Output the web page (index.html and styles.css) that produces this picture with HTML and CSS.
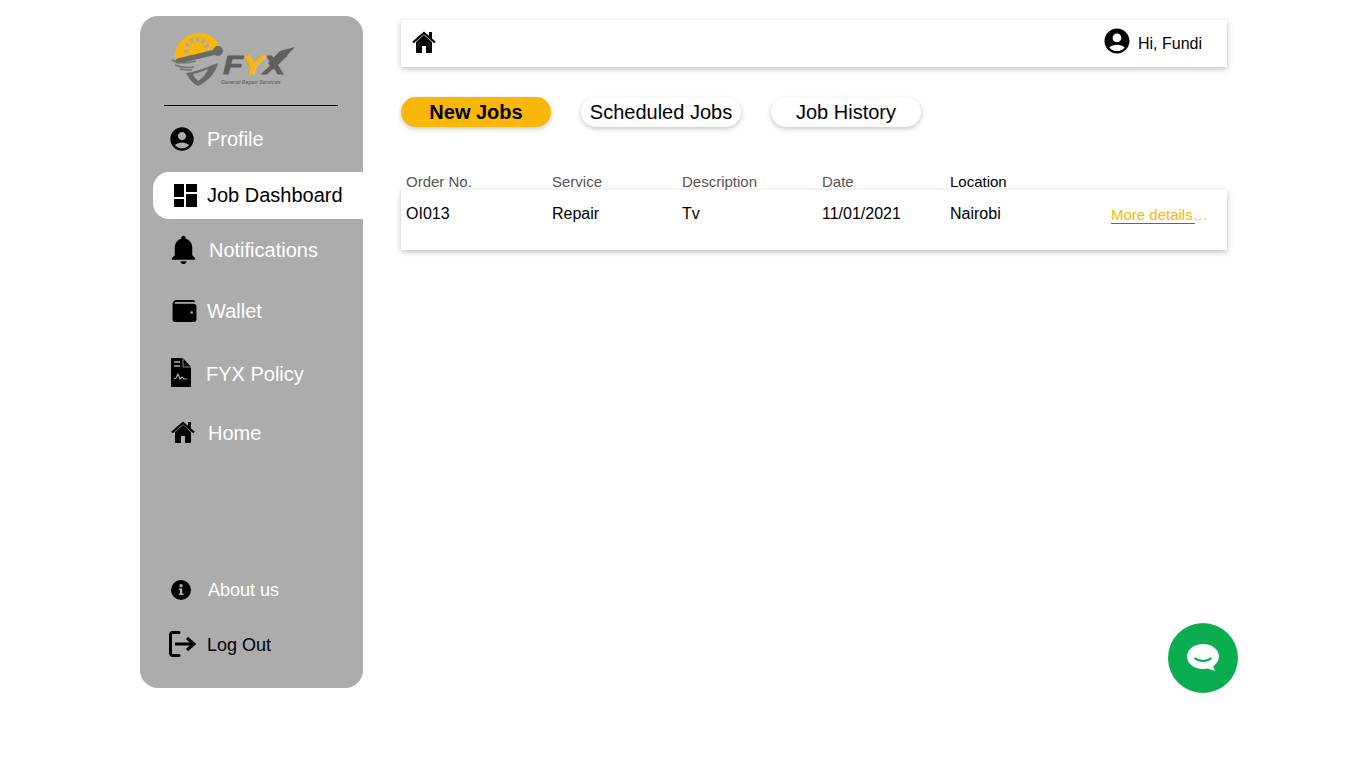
FILE: index.html
```html
<!DOCTYPE html>
<html lang="en">
<head>
    <meta charset="UTF-8">
    <meta name="viewport" content="width=device-width, initial-scale=1.0">
    <title>Job Dashboard</title>
    <link rel="stylesheet" href="styles.css">
</head>
<body>
    <div class="page">
        <aside class="sidebar">
            <div class="logo">
                <svg width="125" height="56" viewBox="0 0 125 56">
                    <path d="M4 27C3 12 15 1 29 1c9 0 16 5 19 13l-6 3-14 6-12 3-6 2z" fill="#f9b707"/>
                    <circle cx="26" cy="18" r="10.500" fill="none" stroke="#a9a9a9" stroke-width="4.500" stroke-dasharray="3.500 2.500"/>
                    <circle cx="28" cy="19" r="6" fill="#f9b707"/>
                    <path d="M7 29l38-9" stroke="#6a6a6a" stroke-width="5" stroke-linecap="round"/>
                    <circle cx="47" cy="19" r="5" fill="#6a6a6a"/>
                    <path d="M1 28c6 4 16 3 24 1M4 33c6 3 12 3 19 2M9 37c4 1 8 1 12 1" fill="none" stroke="#757575" stroke-width="1.600"/>
                    <path d="M15 41c5 0 20-5 32-10-2 9-9 18-20 23-5-2-9-7-12-13z" fill="#6a6a6a"/>
                    <path d="M22 42c5-1 10-3 15-5-2 5-5 9-10 12-2-2-4-4-5-7z" fill="#a9a9a9"/>
                    <text x="52" y="42" textLength="20" lengthAdjust="spacingAndGlyphs" class="logo-mark logo-grey">F</text>
                    <path d="M102 38L124 15l-15 4-12 12z" fill="#5f5f5f"/>
                    <text x="92" y="42" textLength="22" lengthAdjust="spacingAndGlyphs" class="logo-mark logo-grey">X</text>
                    <text x="71" y="42" textLength="22" lengthAdjust="spacingAndGlyphs" class="logo-mark logo-yellow">Y</text>
                    <text x="50" y="52" class="logo-tag">General Repair Services</text>
                </svg>
            </div>
            <div class="divider"></div>
            <nav class="menu">
                <a class="item item-profile">
                    <svg class="icon" width="28" height="28" viewBox="0 0 24 24"><path d="M12 2C6.480 2 2 6.480 2 12s4.480 10 10 10 10-4.480 10-10S17.520 2 12 2zm0 4c1.930 0 3.500 1.570 3.500 3.500S13.930 13 12 13s-3.500-1.570-3.500-3.500S10.070 6 12 6zm0 14c-2.030 0-4.430-.82-6.140-2.880C7.550 15.800 9.680 15 12 15s4.450.8 6.140 2.120C16.430 19.180 14.030 20 12 20z"/></svg>
                    <span>Profile</span>
                </a>
                <a class="item item-dash active">
                    <svg class="icon" width="23" height="23" viewBox="0 0 23 23"><path d="M0 0h10v13H0zM0 15h10v8H0zM12 0h11v8H12zM12 10h11v13H12z"/></svg>
                    <span>Job Dashboard</span>
                </a>
                <a class="item item-notif">
                    <svg class="icon" width="35" height="35" viewBox="0 0 24 24"><path d="M12 22c1.100 0 2-.9 2-2h-4c0 1.100.9 2 2 2zm6-6v-5c0-3.070-1.630-5.640-4.500-6.320V4c0-.83-.67-1.500-1.500-1.500s-1.500.67-1.500 1.500v.68C7.640 5.360 6 7.920 6 11v5l-2 2v1h16v-1l-2-2z"/></svg>
                    <span>Notifications</span>
                </a>
                <a class="item item-wallet">
                    <svg class="icon" width="25" height="22" viewBox="0 0 25 23"><path d="M4 0h17c1.500 0 2.500 1 2.500 2H4C2.500 2 2 3 2 4h20c1.500 0 3 1 3 3v13c0 1.500-1 3-3 3H3c-1.500 0-3-1-3-3V4c0-2 2-4 4-4z"/><circle cx="20" cy="13" r="1.300" fill="#acacac"/></svg>
                    <span>Wallet</span>
                </a>
                <a class="item item-policy">
                    <svg class="icon" width="20" height="29" viewBox="0 0 20 29"><path d="M1 0h11l8 9v19c0 .6-.4 1-1 1H1c-.6 0-1-.4-1-1V1c0-.6.4-1 1-1z"/><path d="M3 4h6M3 8h6" stroke="#acacac" stroke-width="1.400"/><path d="M12 0v9h8" fill="none" stroke="#acacac" stroke-width=".8"/><path d="M3 21l2-1 2-4 2 5 2-2 2 2 3 0" fill="none" stroke="#acacac" stroke-width="1.100"/></svg>
                    <span>FYX Policy</span>
                </a>
                <a class="item item-home">
                    <svg class="icon" width="24" height="22" viewBox="0 0 24 22"><path d="M12 4L4 11v10c0 .6.4 1 1 1h5v-7h4v7h5c.6 0 1-.4 1-1V11z"/><path d="M1 11.500L12 2l11 9.500" fill="none" stroke="#000" stroke-width="2.200"/><path d="M17 1h3v6h-3z"/></svg>
                    <span>Home</span>
                </a>
                <a class="item item-about">
                    <svg class="icon" width="20" height="20" viewBox="0 0 20 20"><circle cx="10" cy="10" r="10"/><circle cx="10" cy="5.800" r="1.700" fill="#acacac"/><path d="M7.800 8.500h3.500v5h1.200V15H7.800v-1.500H9V10H7.800z" fill="#acacac"/></svg>
                    <span>About us</span>
                </a>
                <a class="item item-logout">
                    <svg class="icon" width="27" height="26" viewBox="0 0 27 26"><path d="M10 1.500H3.500c-1 0-2 1-2 2v19c0 1 1 2 2 2H10" fill="none" stroke="#000" stroke-width="3" stroke-linecap="round"/><path d="M6 13h18M18 7l7 6-7 6" fill="none" stroke="#000" stroke-width="3"/></svg>
                    <span>Log Out</span>
                </a>
            </nav>
        </aside>

        <main class="content">
            <header class="topbar">
                <svg class="top-home" width="24" height="22" viewBox="0 0 24 22"><path d="M12 4L4 11v10c0 .6.4 1 1 1h5v-7h4v7h5c.6 0 1-.4 1-1V11z"/><path d="M1 11.500L12 2l11 9.500" fill="none" stroke="#000" stroke-width="2.200"/><path d="M17 1h3v6h-3z"/></svg>
                <div class="user">
                    <svg width="30" height="30" viewBox="0 0 24 24"><path d="M12 2C6.480 2 2 6.480 2 12s4.480 10 10 10 10-4.480 10-10S17.520 2 12 2zm0 4c1.930 0 3.500 1.570 3.500 3.500S13.930 13 12 13s-3.500-1.570-3.500-3.500S10.070 6 12 6zm0 14c-2.030 0-4.430-.82-6.140-2.880C7.550 15.800 9.680 15 12 15s4.450.8 6.140 2.120C16.430 19.180 14.030 20 12 20z"/></svg>
                    <span>Hi, Fundi</span>
                </div>
            </header>

            <div class="tabs">
                <a class="tab tab-active">New Jobs</a>
                <a class="tab tab-wide">Scheduled Jobs</a>
                <a class="tab">Job History</a>
            </div>

            <div class="jobs-head">
                <span>Order No.</span>
                <span>Service</span>
                <span>Description</span>
                <span>Date</span>
                <span class="dark">Location</span>
            </div>
            <div class="job-row">
                <span>OI013</span>
                <span>Repair</span>
                <span>Tv</span>
                <span>11/01/2021</span>
                <span>Nairobi</span>
                <a class="more"><span class="more-line">More details</span>…</a>
            </div>
        </main>
    </div>

    <a class="chat">
        <svg width="36" height="32" viewBox="0 0 36 32"><path d="M18 2C9 2 2 7.500 2 14.500S9 27 18 27c1.800 0 3-.2 4.500-.5L30 29l-1.800-5C32 21.500 34 18 34 14.500 34 7.500 27 2 18 2z" fill="#fff"/><path d="M9.500 16c5 4 12 4 17 0" fill="none" stroke="#0aad4f" stroke-width="2"/></svg>
    </a>
</body>
</html>
```

FILE: styles.css
```css
body {
    margin: 0;
    font-family: "Liberation Sans", Arial, sans-serif;
    background-color: #fff;
    color: #000;
}
.page {
    display: flex;
    align-items: flex-start;
    padding: 16px 0 0 140px;
}

/* sidebar */
.sidebar {
    width: 223px;
    height: 672px;
    background-color: #acacac;
    border-radius: 18px;
    flex-shrink: 0;
}
.logo {
    height: 73px;
    padding: 16px 0 0 31px;
    box-sizing: border-box;
}
.logo svg {
    display: block;
}
.logo-mark {
    font-size: 25px;
    font-weight: bold;
    font-style: italic;
    stroke-width: 0.8px;
}
.logo-grey {
    fill: #5f5f5f;
    stroke: #5f5f5f;
}
.logo-yellow {
    fill: #f9b707;
    stroke: #f9b707;
}
.logo-tag {
    font-size: 5.200px;
    font-weight: bold;
    font-style: italic;
    fill: #6a6a6a;
}
.divider {
    height: 1px;
    margin: 16px 25px 0 24px;
    background-color: #000;
}
.menu {
    display: flex;
    flex-direction: column;
}
.item {
    display: flex;
    align-items: center;
    height: 47px;
    color: #fff;
    font-size: 20px;
}
.icon {
    display: block;
    flex-shrink: 0;
}
.item-profile {
    margin-top: 10px;
    padding-left: 28px;
    gap: 11px;
}
.item-profile .icon {
    margin-bottom: 2px;
}
.item-dash {
    margin-top: 9px;
    margin-left: 13px;
    padding-left: 21px;
    gap: 10px;
}
.active {
    background-color: #fff;
    color: #000;
    border-radius: 16px 0 0 16px;
}
.item-notif {
    margin-top: 8px;
    padding-left: 26px;
    gap: 8px;
}
.item-notif .icon {
    margin-bottom: 3px;
}
.item-wallet {
    margin-top: 14px;
    padding-left: 32px;
    gap: 10px;
}
.item-wallet .icon {
    margin-bottom: 2px;
}
.item-policy {
    margin-top: 16px;
    padding-left: 31px;
    gap: 15px;
}
.item-policy .icon {
    margin-bottom: 4px;
}
.item-home {
    margin-top: 12px;
    padding-left: 31px;
    gap: 13px;
}
.item-home .icon {
    margin-bottom: 4px;
}
.item-about {
    margin-top: 110px;
    padding-left: 31px;
    gap: 17px;
    font-size: 18px;
}
.item-about .icon {
    margin-bottom: 2px;
}
.item-logout {
    margin-top: 8px;
    padding-left: 29px;
    gap: 11px;
    color: #000;
    font-size: 18px;
}
.item-logout .icon {
    margin-bottom: 4px;
}

/* main area */
.content {
    width: 826px;
    margin: 4px 0 0 38px;
}
.topbar {
    display: flex;
    justify-content: space-between;
    align-items: center;
    height: 47px;
    padding: 0 25px 0 11px;
    background-color: #fff;
    box-shadow: 0 2px 6px rgba(0,0,0,0.25);
}
.top-home {
    display: block;
    margin-bottom: 4px;
}
.user {
    display: flex;
    align-items: center;
    gap: 6px;
    margin-top: -2px;
    font-size: 16px;
}
.user svg {
    display: block;
    margin-top: -4px;
}
.user span {
    margin-top: 2px;
}
.tabs {
    display: flex;
    gap: 30px;
    margin-top: 30px;
}
.tab {
    display: flex;
    justify-content: center;
    align-items: center;
    width: 150px;
    height: 30px;
    background-color: #fff;
    border-radius: 15px;
    box-shadow: 0 2px 5px rgba(0,0,0,0.22);
    font-size: 20px;
}
.tab-wide {
    width: 160px;
}
.tab-active {
    background-color: #f9b707;
    font-weight: bold;
}
.jobs-head,
.job-row {
    display: grid;
    grid-template-columns: 146px 130px 140px 128px 1fr;
    padding-left: 5px;
}
.jobs-head {
    margin-top: 46px;
    height: 17px;
    line-height: 17px;
    font-size: 15px;
    color: #555;
}
.jobs-head .dark {
    color: #000;
}
.job-row {
    grid-template-columns: 146px 130px 140px 128px 161px 1fr;
    height: 60px;
    padding-top: 15px;
    box-sizing: border-box;
    line-height: 18px;
    font-size: 16px;
    background-color: #fff;
    box-shadow: 0 2px 6px rgba(0,0,0,0.25);
}
.more {
    margin-top: 1px;
    color: #f9b707;
    font-size: 15px;
    white-space: nowrap;
}
.more-line {
    display: inline-block;
    line-height: 16px;
    padding-right: 2px;
    margin-right: -2px;
    border-bottom: 1px solid #666;
}

/* floating chat button */
.chat {
    position: fixed;
    left: 1168px;
    top: 623px;
    display: flex;
    justify-content: center;
    align-items: center;
    width: 70px;
    height: 70px;
    background-color: #0aad4f;
    border-radius: 50%;
}
```
